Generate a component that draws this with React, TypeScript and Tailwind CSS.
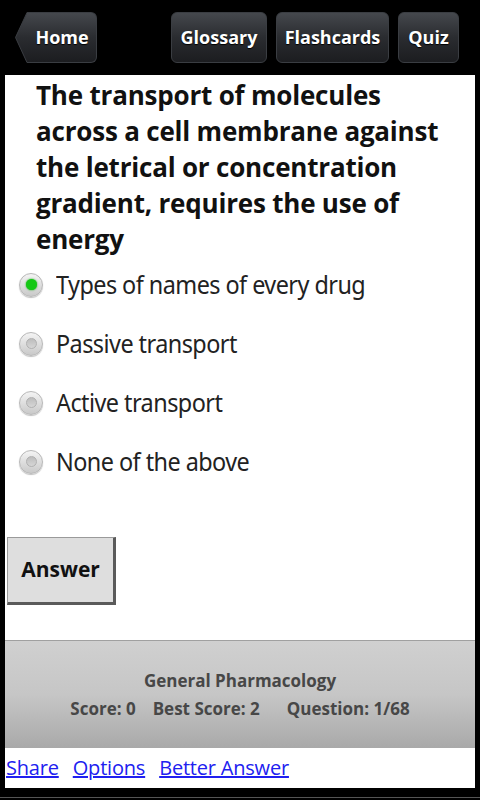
const options = [
  "Types of names of every drug",
  "Passive transport",
  "Active transport",
  "None of the above",
];

function NavButton({ label, width }: { label: string; width: string }) {
  return (
    <div
      className={`${width} h-[51px] flex items-center justify-center rounded-[6px] border border-[#3a3d42] bg-gradient-to-b from-[#45484d] via-[#2a2c30] to-[#1c1d20] text-white font-bold text-[18px] [text-shadow:0_1px_1px_#000]`}
    >
      {label}
    </div>
  );
}

function Radio({ checked }: { checked: boolean }) {
  return (
    <div className="w-[24px] h-[24px] rounded-full border border-[#b8b8b8] bg-gradient-to-b from-[#f4f4f4] to-[#c9c9c9] flex items-center justify-center shadow-[0_1px_1px_rgba(0,0,0,0.25)]">
      {checked ? (
        <div className="w-[11px] h-[11px] rounded-full bg-[#14c814] shadow-[0_0_2px_#0a0]" />
      ) : (
        <div className="w-[11px] h-[11px] rounded-full bg-gradient-to-b from-[#bdbdbd] to-[#d6d6d6] border border-[#b0b0b0]" />
      )}
    </div>
  );
}

export default function App() {
  return (
    <div className="w-[480px] h-[800px] bg-black flex flex-col font-['Open_Sans','Noto_Sans',sans-serif]">
      {/* top bar */}
      <div className="h-[75px] flex items-center px-[15px] shrink-0">
        <div className="flex items-center">
          <svg width="14" height="51" viewBox="0 0 14 51" className="-mr-px">
            <defs>
              <linearGradient id="hg" x1="0" y1="0" x2="0" y2="1">
                <stop offset="0" stopColor="#45484d" />
                <stop offset="0.5" stopColor="#2a2c30" />
                <stop offset="1" stopColor="#1c1d20" />
              </linearGradient>
            </defs>
            <path d="M14 0.5 L12 0.5 L0.5 25.5 L12 50.5 L14 50.5 Z" fill="url(#hg)" stroke="#3a3d42" />
          </svg>
          <div className="w-[69px] h-[51px] flex items-center justify-center rounded-r-[6px] border border-l-0 border-[#3a3d42] bg-gradient-to-b from-[#45484d] via-[#2a2c30] to-[#1c1d20] text-white font-bold text-[18px] [text-shadow:0_1px_1px_#000]">
            Home
          </div>
        </div>
        <div className="ml-auto flex gap-[9px]">
          <NavButton label="Glossary" width="w-[96px]" />
          <NavButton label="Flashcards" width="w-[113px]" />
          <NavButton label="Quiz" width="w-[61px]" />
        </div>
        <div className="w-[6px]" />
      </div>

      {/* content panel */}
      <div className="mx-[5px] bg-white flex-1 flex flex-col min-h-0">
        <div className="flex-1 flex flex-col">
          <h1 className="pl-[31px] pr-[20px] pt-[2px] text-[26px] leading-[36px] font-bold text-[#111] tracking-[-0.2px]">
            The transport of molecules across a cell membrane against the letrical or concentration gradient, requires the use of energy
          </h1>
          <div className="flex flex-col -mt-[2px]">
            {options.map((o, i) => (
              <div key={o} className="h-[59px] flex items-center pl-[14px] gap-[13px]">
                <Radio checked={i === 0} />
                <span className="text-[26px] text-[#222] font-['Noto_Sans',sans-serif] tracking-[-0.6px] scale-x-[0.9] origin-left">
                  {o}
                </span>
              </div>
            ))}
          </div>
          <div className="mt-[46px] ml-[2px] w-[109px] h-[68px] bg-[#dedede] border border-[#9a9a9a] border-r-[3px] border-b-[3px] border-r-[#5a5a5a] border-b-[#5a5a5a] flex items-center justify-center font-bold text-[21px] text-[#111]">
            Answer
          </div>
        </div>

        {/* stats footer */}
        <div className="h-[108px] border-t border-[#a0a0a0] bg-gradient-to-b from-[#d0d0d0] via-[#c6c6c6] to-[#a9a9a9] flex flex-col items-center justify-center text-[#474747] font-bold text-[17px] leading-[28px]">
          <div>General Pharmacology</div>
          <div className="flex">
            <span>Score: 0</span>
            <span className="ml-[17px]">Best Score: 2</span>
            <span className="ml-[27px]">Question: 1/68</span>
          </div>
        </div>

        {/* links */}
        <div className="h-[40px] flex items-center gap-[14px] pl-px text-[20px] text-[#2020f0] underline shrink-0 tracking-[-0.2px]">
          <span>Share</span>
          <span>Options</span>
          <span>Better Answer</span>
        </div>
      </div>
      <div className="h-[12px] shrink-0 relative">
        <div className="absolute left-0 right-0 bottom-[2px] h-px bg-[#555]" />
      </div>
    </div>
  );
}
